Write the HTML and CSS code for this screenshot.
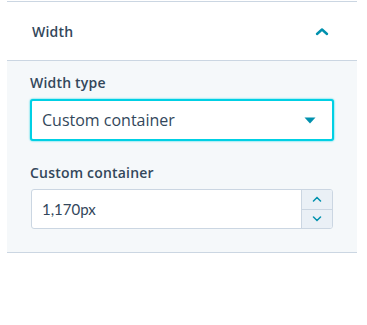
FILE: index.html
```html
<!DOCTYPE html>
<html lang="en">
<head>
  <meta charset="UTF-8" />
  <title>Width settings</title>
  <link rel="stylesheet" href="styles.css">
</head>
<body>
  <div class="panel">
    <div class="panel-header">
      <span class="panel-title">Width</span>
      <svg class="chevron" width="14" height="9" viewBox="0 0 14 9">
        <path d="M2 7 L7 2.5 L12 7" fill="none" stroke="#0091ae" stroke-width="2.4" stroke-linecap="round" stroke-linejoin="round"/>
      </svg>
    </div>
    <div class="panel-body">
      <div class="field">
        <label class="field-label">Width type</label>
        <div class="select focused">
          <span>Custom container</span>
          <svg class="caret" width="12" height="7" viewBox="0 0 12 7">
            <path d="M0.5 0.5 H11.5 L6 6.5 Z" fill="#0091ae"/>
          </svg>
        </div>
      </div>
      <div class="field">
        <label class="field-label">Custom container</label>
        <div class="number-input">
          <span class="value">1,170px</span>
          <div class="stepper">
            <button class="step">
              <svg width="10" height="6" viewBox="0 0 10 6"><path d="M1.5 5 L5 1.5 L8.5 5" fill="none" stroke="#0091ae" stroke-width="1.5" stroke-linecap="round"/></svg>
            </button>
            <button class="step">
              <svg width="10" height="6" viewBox="0 0 10 6"><path d="M1.5 1 L5 4.5 L8.5 1" fill="none" stroke="#0091ae" stroke-width="1.5" stroke-linecap="round"/></svg>
            </button>
          </div>
        </div>
      </div>
    </div>
  </div>
</body>
</html>
```

FILE: styles.css
```css
body {
  margin: 0;
  background: #fff;
  font-family: "Open Sans", "Lato", sans-serif;
  color: #33475b;
}

.panel {
  width: 350px;
  margin: 1px 0 0 7px;
  border-top: 1px solid #cbd6e2;
  border-bottom: 1px solid #cbd6e2;
}

.panel-header {
  height: 58px;
  display: flex;
  align-items: center;
  justify-content: space-between;
  padding: 0 28px 0 25px;
  border-bottom: 1px solid #cbd6e2;
}

.panel-title {
  font-size: 14px;
  font-weight: 600;
  letter-spacing: 0.2px;
}

.chevron {
  display: block;
}

.panel-body {
  background: #f5f8fa;
  padding: 13px 23px 23px;
  display: flex;
  flex-direction: column;
  gap: 23px;
}

.field {
  display: flex;
  flex-direction: column;
  gap: 7px;
}

.field-label {
  font-size: 14px;
  font-weight: 600;
  line-height: 18px;
  letter-spacing: 0.2px;
}

.select {
  height: 38px;
  background: #fff;
  border: 2px solid #00d0e4;
  border-radius: 3px;
  box-shadow: 0 0 2px #00d0e4;
  display: flex;
  align-items: center;
  justify-content: space-between;
  padding: 0 16px 0 10px;
  font-size: 16px;
}

.caret {
  display: block;
}

.number-input {
  height: 38px;
  margin: 0 1px;
  background: #fff;
  border: 1px solid #cbd6e2;
  border-radius: 3px;
  display: flex;
  align-items: center;
  overflow: hidden;
}

.value {
  flex: 1;
  padding-left: 10px;
  font-size: 15px;
  font-family: "Lato", sans-serif;
}

.stepper {
  width: 30px;
  height: 100%;
  display: flex;
  flex-direction: column;
  border-left: 1px solid #cbd6e2;
}

.step {
  flex: 1;
  margin: 0;
  padding: 0;
  border: 0;
  background: #eaf0f6;
  display: flex;
  align-items: center;
  justify-content: center;
}

.step + .step {
  border-top: 1px solid #cbd6e2;
}
```
